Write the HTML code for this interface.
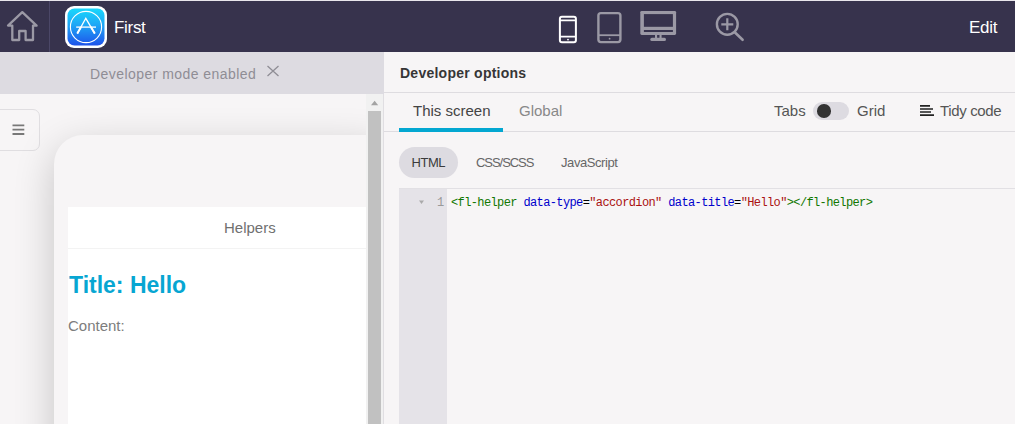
<!DOCTYPE html>
<html><head><meta charset="utf-8">
<style>
*{margin:0;padding:0;box-sizing:border-box}
html,body{width:1015px;height:424px;overflow:hidden;background:#f7f5f6;font-family:"Liberation Sans",sans-serif}
.abs{position:absolute}
#topline{left:0;top:0;width:1015px;height:1px;background:#e9e7ec}
#top{left:0;top:1px;width:1015px;height:52px;background:#37334d}
#sep{left:49px;top:1px;width:1px;height:52px;background:#4b4767}
.wt{color:#fff;font-size:17px;white-space:nowrap}
#left{left:0;top:52px;width:384px;height:372px;background:#f7f5f6;overflow:hidden}
#banner{left:0;top:0;width:384px;height:42px;background:#dddbe1}
#bantxt{left:90px;top:14px;font-size:14px;letter-spacing:0.45px;color:#8f8d95;white-space:nowrap}
#ham{left:-10px;top:57px;width:50px;height:42px;border:1px solid #e0dee1;border-radius:7px}
#phone{left:53.7px;top:83px;width:340px;height:400px;background:#f7f5f6;border-radius:29px;box-shadow:0 12px 40px rgba(0,0,0,0.2)}
#screen{left:68px;top:155px;width:298px;height:300px;background:#fff}
#hdr{left:0;top:0;width:298px;height:42px;background:#fff;border-bottom:1px solid #f3f3f3}
#sbtrack{left:366px;top:42px;width:17px;height:330px;background:#f1f1f1}
#sbthumb{left:368px;top:59px;width:13px;height:320px;background:#c1c1c1}
#divl{left:383px;top:94px;width:1px;height:330px;background:#e0dee2}
#right{left:384px;top:52px;width:631px;height:372px;background:#f7f5f6}
.rt{position:absolute;white-space:nowrap}
</style></head><body>
<div id="topline" class="abs"></div>
<div id="top" class="abs"></div>
<div id="sep" class="abs"></div>
<!-- home icon -->
<svg class="abs" style="left:0;top:0" width="50" height="52" viewBox="0 0 50 52">
<path d="M8 25.6 L22.3 12.2 L36.6 25.6 H33 V40 H25.6 V31 H19.2 V40 H12.3 V25.6 Z" fill="none" stroke="#9b99a5" stroke-width="2.3" stroke-linejoin="round"/>
</svg>
<!-- app icon -->
<svg class="abs" style="left:65px;top:6px" width="42" height="42" viewBox="0 0 42 42">
<defs><linearGradient id="g" x1="0" y1="0" x2="0" y2="1"><stop offset="0" stop-color="#19d8fb"/><stop offset="0.45" stop-color="#1ea6f6"/><stop offset="1" stop-color="#1e52ea"/></linearGradient></defs>
<rect x="0" y="0" width="42" height="42" rx="9" fill="#fff"/>
<rect x="2.5" y="2.5" width="37" height="37" rx="7" fill="url(#g)"/>
<circle cx="21" cy="21" r="15.6" fill="none" stroke="#fff" stroke-width="1.1"/>
<path d="M12.3 27.6 L20.8 12.3 L29.8 27.6" fill="none" stroke="#fff" stroke-width="1.3"/><path d="M12.3 27.6 L16 21 M29.8 27.6 L25.9 21" fill="none" stroke="#fff" stroke-width="2"/>
<path d="M11.2 21.1 H31" fill="none" stroke="#fff" stroke-width="1.3"/>
</svg>
<div class="abs wt" style="left:114px;top:18px;letter-spacing:-0.3px">First</div>
<!-- phone icon -->
<svg class="abs" style="left:550px;top:5px" width="210" height="45" viewBox="550 5 210 45">
<rect x="559.9" y="16.8" width="16" height="25.4" rx="2" fill="none" stroke="#fff" stroke-width="2"/>
<path d="M560 20.4 H576 M560 36.6 H576" stroke="#fff" stroke-width="1.6"/>
<circle cx="568" cy="39.6" r="0.9" fill="#fff"/>
<rect x="598.4" y="13.1" width="22" height="29" rx="2.5" fill="none" stroke="#9b99a5" stroke-width="2.4"/>
<path d="M598.5 35.2 H620.5" stroke="#9b99a5" stroke-width="1.8"/>
<circle cx="609.6" cy="38.7" r="0.9" fill="#9b99a5"/>
<rect x="640.3" y="10.9" width="35.8" height="24" rx="1.4" fill="#9b99a5"/>
<rect x="643.9" y="14.1" width="29" height="12.7" fill="#37334d"/>
<rect x="643.9" y="30" width="29" height="2" fill="#37334d"/>
<rect x="655" y="34.5" width="2.1" height="3.6" fill="#9b99a5"/>
<rect x="659.5" y="34.5" width="2.1" height="3.6" fill="#9b99a5"/>
<rect x="650.3" y="37.8" width="15.7" height="3.2" rx="1.6" fill="#9b99a5"/>
<circle cx="727.3" cy="24.3" r="10.4" fill="none" stroke="#9b99a5" stroke-width="2.4"/>
<path d="M721.3 24.3 H733.3 M727.3 18.3 V30.3" stroke="#9b99a5" stroke-width="2.2"/>
<path d="M735 32.5 L742.6 39.8" stroke="#9b99a5" stroke-width="2.6" stroke-linecap="round"/>
</svg>
<div class="abs wt" style="left:969px;top:18px;letter-spacing:-0.3px">Edit</div>

<!-- LEFT -->
<div id="left" class="abs">
  <div id="banner" class="abs"></div>
  <div id="bantxt" class="abs">Developer mode enabled</div>
  <svg class="abs" style="left:266px;top:13px" width="14" height="12" viewBox="0 0 14 12"><path d="M1.5 1 L12.5 11 M12.5 1 L1.5 11" stroke="#8f8d95" stroke-width="1.3"/></svg>
  <div id="ham" class="abs"></div>
  <svg class="abs" style="left:12px;top:71px" width="13" height="12" viewBox="0 0 13 12"><path d="M0.5 2.3 H12.3 M0.5 6.6 H12.3 M0.5 11 H12.3" stroke="#787878" stroke-width="1.8"/></svg>
  <div id="phone" class="abs"></div>
  <div id="screen" class="abs">
    <div id="hdr" class="abs"></div>
    <div class="abs" style="left:156px;top:12px;font-size:15px;color:#707070;white-space:nowrap">Helpers</div>
    <div class="abs" style="left:1px;top:65px;font-size:23px;font-weight:bold;color:#07a6d2;white-space:nowrap">Title: Hello</div>
    <div class="abs" style="left:0px;top:109.5px;font-size:15px;color:#7d7d7d;white-space:nowrap">Content:</div>
  </div>
  <div id="sbtrack" class="abs"></div>
  <svg class="abs" style="left:370px;top:47px" width="10" height="8" viewBox="0 0 10 8"><path d="M1 6.2 L4.6 1.8 L8.2 6.2 Z" fill="#a3a3a3"/></svg>
  <div id="sbthumb" class="abs"></div>
</div>
<div id="divl" class="abs"></div>

<!-- RIGHT -->
<div id="right" class="abs">
  <div class="rt" style="left:16px;top:12.8px;font-size:14px;font-weight:bold;color:#363636;letter-spacing:0.25px">Developer options</div>
  <div class="abs" style="left:0;top:40px;width:631px;height:1px;background:#dedce0"></div>
  <div class="rt" style="left:29px;top:50px;font-size:15px;color:#444">This screen</div>
  <div class="rt" style="left:135px;top:50px;font-size:15px;color:#888">Global</div>
  <div class="abs" style="left:0;top:79px;width:631px;height:1px;background:#dedce0"></div>
  <div class="abs" style="left:15px;top:76px;width:104px;height:4px;background:#03a7d1"></div>
  <div class="rt" style="left:390px;top:50px;font-size:15px;color:#555">Tabs</div>
  <div class="abs" style="left:429px;top:50px;width:36px;height:18px;border-radius:9px;background:#dddbe1"></div>
  <div class="abs" style="left:433.2px;top:52.1px;width:13.6px;height:13.6px;border-radius:50%;background:#333"></div>
  <div class="rt" style="left:473px;top:50px;font-size:15px;color:#555">Grid</div>
  <svg class="abs" style="left:536px;top:53px" width="15" height="12" viewBox="0 0 15 12"><path d="M0 0.8 H10 M0 4 H13 M0 7 H11 M0 10.2 H14" stroke="#222" stroke-width="1.7"/></svg>
  <div class="rt" style="left:556px;top:50px;font-size:15px;color:#555;letter-spacing:-0.35px">Tidy code</div>
  <div class="abs" style="left:15px;top:95px;width:59px;height:31px;border-radius:15.5px;background:#dddbe1"></div>
  <div class="rt" style="left:27.5px;top:103px;font-size:13px;color:#3b3b3b;letter-spacing:-0.45px">HTML</div>
  <div class="rt" style="left:92px;top:103px;font-size:13px;color:#666;letter-spacing:-1.05px">CSS/SCSS</div>
  <div class="rt" style="left:177px;top:103px;font-size:13px;color:#666;letter-spacing:-0.42px">JavaScript</div>
  <div class="abs" style="left:15px;top:136px;width:616px;height:1px;background:#e2e0e4"></div>
  <div class="abs" style="left:15px;top:137px;width:48px;height:235px;background:#e5e3e8"></div>
  <svg class="abs" style="left:35px;top:148px" width="6" height="5" viewBox="0 0 6 5"><path d="M0 0.5 H5 L2.5 4 Z" fill="#aaa"/></svg>
  <div class="rt" style="left:53px;top:143.5px;font-size:12px;letter-spacing:-0.62px;font-family:'Liberation Mono',monospace;color:#999">1</div>
  <div class="rt" style="left:67px;top:143.5px;font-size:12px;letter-spacing:-0.62px;font-family:'Liberation Mono',monospace;color:#000"><span style="color:#170">&lt;fl-helper</span> <span style="color:#00c">data-type</span>=<span style="color:#a11">"accordion"</span> <span style="color:#00c">data-title</span>=<span style="color:#a11">"Hello"</span><span style="color:#170">&gt;&lt;/fl-helper&gt;</span></div>
</div>
</body></html>
